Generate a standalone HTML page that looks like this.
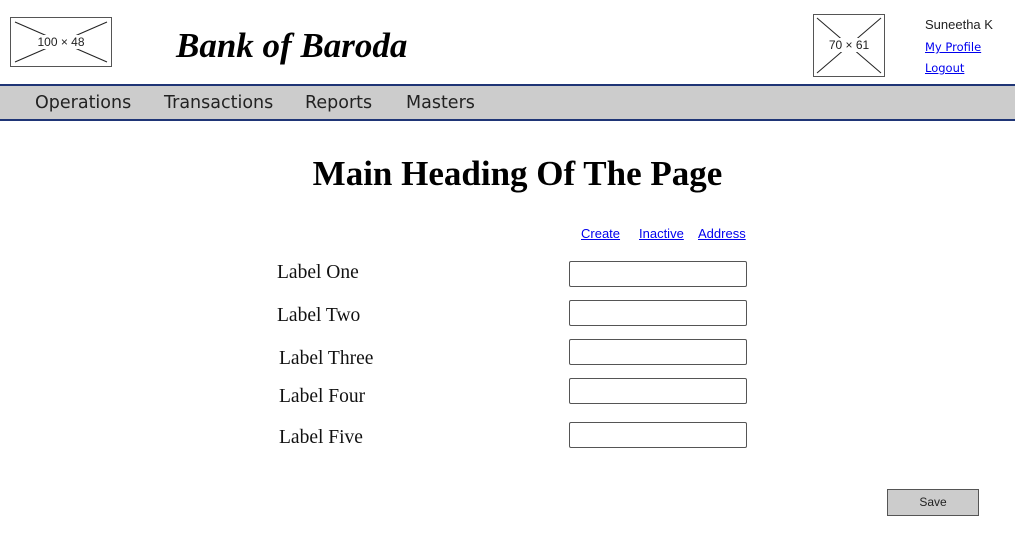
<!DOCTYPE html>
<html><head><meta charset="utf-8"><style>
body{margin:0;width:1015px;height:545px;background:#fff;position:relative;overflow:hidden;font-family:"Liberation Sans",sans-serif}
.a{position:absolute}
.ph{position:absolute;border:1.5px solid #555;box-sizing:border-box;background:#fff}
.ph svg{position:absolute;left:0;top:0}
.ph span{position:absolute;left:0;right:0;text-align:center;font-size:12px;color:#222;background:#fff;padding:0 1px;width:max-content;margin:auto}
.nav{position:absolute;left:0;top:84px;width:1015px;height:37px;background:#ccc;border-top:2px solid #1f3576;border-bottom:2px solid #1f3576;box-sizing:border-box}
.nav span{position:absolute;top:7px;color:#222;font-family:"DejaVu Sans","Liberation Sans",sans-serif;font-size:17.5px}
.lbl{position:absolute;font-family:"Liberation Serif",serif;font-size:19.5px;color:#111}
.in{position:absolute;left:569px;width:178px;height:26px;border:1.5px solid #555;box-sizing:border-box;border-radius:2px}
a{color:#00e;text-decoration:underline;position:absolute;font-size:13px}
</style></head><body>
<div class="ph" style="left:10px;top:17px;width:102px;height:50px">
<svg width="100" height="48"><line x1="4" y1="4" x2="96" y2="44" stroke="#222"/><line x1="96" y1="4" x2="4" y2="44" stroke="#222"/></svg>
<span style="top:17px">100 × 48</span></div>
<div class="a" style="left:176px;top:26px;font-family:'Liberation Serif',serif;font-style:italic;font-weight:bold;font-size:35px">Bank of Baroda</div>
<div class="ph" style="left:813px;top:14px;width:72px;height:63px">
<svg width="70" height="61"><line x1="3" y1="3" x2="67" y2="58" stroke="#222"/><line x1="67" y1="3" x2="3" y2="58" stroke="#222"/></svg>
<span style="top:23px">70 × 61</span></div>
<div class="a" style="left:925px;top:17px;font-size:13px;color:#222">Suneetha K</div>
<a style="left:925px;top:40px;font-size:11.5px;font-family:'DejaVu Sans',sans-serif">My Profile</a>
<a style="left:925px;top:61px;font-size:11.5px;font-family:'DejaVu Sans',sans-serif">Logout</a>
<div class="nav"><span style="left:35px">Operations</span><span style="left:164px">Transactions</span><span style="left:305px">Reports</span><span style="left:406px">Masters</span></div>
<div class="a" style="left:0;width:1035px;text-align:center;top:154px;font-family:'Liberation Serif',serif;font-weight:bold;font-size:35px">Main Heading Of The Page</div>
<a style="left:581px;top:226px">Create</a><a style="left:639px;top:226px">Inactive</a><a style="left:698px;top:226px">Address</a>
<div class="lbl" style="left:277px;top:262px">Label One</div>
<div class="lbl" style="left:277px;top:305px">Label Two</div>
<div class="lbl" style="left:279px;top:348px">Label Three</div>
<div class="lbl" style="left:279px;top:386px">Label Four</div>
<div class="lbl" style="left:279px;top:427px">Label Five</div>
<div class="in" style="top:261px"></div>
<div class="in" style="top:300px"></div>
<div class="in" style="top:339px"></div>
<div class="in" style="top:378px"></div>
<div class="in" style="top:422px"></div>
<div class="a" style="left:887px;top:489px;width:92px;height:27px;background:#ccc;border:1.5px solid #555;box-sizing:border-box;text-align:center;font-size:12px;line-height:24px;color:#222">Save</div>
</body></html>
